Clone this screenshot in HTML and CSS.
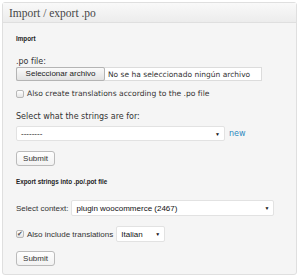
FILE: index.html
```html
<!DOCTYPE html>
<html lang="es">
<head>
    <meta charset="UTF-8">
    <title>Import / export .po</title>
    <link rel="stylesheet" href="styles.css">
</head>
<body>
    <div class="postbox">
        <h3 class="hndle">Import / export .po</h3>
        <div class="inside">
            <h4 class="section-title">Import</h4>

            <div class="label po-label">.po file:</div>
            <div class="file-input">
                <span class="file-btn">Seleccionar archivo</span>
                <span class="file-name">No se ha seleccionado ningún archivo</span>
            </div>

            <label class="check-row">
                <span class="checkbox"></span>
                Also create translations according to the .po file
            </label>

            <div class="label for-label">Select what the strings are for:</div>
            <div class="select-row">
                <div class="select wide">
                    <span>--------</span>
                    <span class="arrow">▼</span>
                </div>
                <a class="new-link" href="#">new</a>
            </div>

            <button class="button">Submit</button>

            <h4 class="section-title export">Export strings into .po/.pot file</h4>

            <div class="inline-row">
                <span class="label-alt">Select context:</span>
                <div class="select context">
                    <span>plugin woocommerce (2467)</span>
                    <span class="arrow">▼</span>
                </div>
            </div>

            <div class="inline-row include">
                <span class="checkbox checked">✔</span>
                <span class="label-alt">Also include translations</span>
                <div class="select lang">
                    <span>Italian</span>
                    <span class="arrow">▼</span>
                </div>
            </div>

            <button class="button last">Submit</button>
        </div>
    </div>
</body>
</html>
```

FILE: styles.css
```css
body {
    margin: 0;
    background: #fff;
    font-family: "DejaVu Sans", sans-serif;
    color: #333;
}
.postbox {
    margin: 2px 3px 0 2px;
    height: 273px;
    box-sizing: border-box;
    border: 1px solid #dfdfdf;
    border-radius: 3px;
    background: #f5f5f5;
}
.hndle {
    margin: 0;
    height: 20px;
    padding: 0 0 0 6px;
    font-family: "Liberation Serif", Georgia, serif;
    font-weight: normal;
    font-size: 11.5px;
    line-height: 20px;
    color: #464646;
    background: linear-gradient(#f9f9f9, #ececec);
    border-bottom: 1px solid #dfdfdf;
    box-sizing: border-box;
}
.inside {
    padding: 11px 13px 0 13px;
    display: flex;
    flex-direction: column;
    align-items: flex-start;
}
.section-title {
    margin: 0;
    font-family: "Liberation Sans", Arial, sans-serif;
    font-size: 6.3px;
    font-weight: bold;
    line-height: 10px;
    color: #222;
}
.section-title.export {
    margin-top: 11px;
}
.label {
    font-size: 8px;
    line-height: 10px;
}
.po-label {
    margin-top: 13px;
}
.for-label {
    margin-top: 13px;
}
.file-input {
    display: flex;
    align-items: center;
    width: 246px;
    height: 14px;
    background: #fff;
    border: 1px solid #dcdcdc;
    box-sizing: border-box;
}
.file-btn {
    height: 14px;
    width: 89px;
    margin: -1px 0 0 -1px;
    box-sizing: border-box;
    border: 1px solid #b4b4b4;
    border-radius: 2px;
    background: linear-gradient(#fafafa, #e2e2e2);
    font-family: "Liberation Sans", Arial, sans-serif;
    font-size: 8px;
    line-height: 12px;
    text-align: center;
    color: #222;
}
.file-name {
    margin-left: 3px;
    font-size: 7.5px;
    white-space: nowrap;
}
.check-row {
    display: flex;
    align-items: center;
    height: 10px;
    margin-top: 8px;
    font-size: 7.6px;
    line-height: 10px;
}
.checkbox {
    width: 8px;
    height: 8px;
    box-sizing: border-box;
    border: 1px solid #b8b8b8;
    border-radius: 2px;
    background: linear-gradient(#fff, #e4e4e4);
    margin-right: 3px;
    display: inline-flex;
    align-items: center;
    justify-content: center;
    font-size: 7px;
    color: #555;
    line-height: 1;
}
.select-row {
    display: flex;
    align-items: center;
    margin-top: 4px;
}
.select {
    display: flex;
    justify-content: space-between;
    align-items: center;
    height: 15px;
    box-sizing: border-box;
    padding: 0 4px 0 4px;
    background: #fff;
    border: 1px solid #e2e2e2;
    border-radius: 2px;
    font-family: "Liberation Sans", Arial, sans-serif;
    font-size: 8px;
    color: #111;
}
.arrow {
    font-size: 5px;
    color: #111;
}
.select.wide {
    width: 209px;
}
.new-link {
    margin-left: 4px;
    font-size: 8px;
    color: #2e8ac0;
    text-decoration: none;
}
.button {
    margin-top: 10px;
    height: 15px;
    width: 39px;
    padding: 0;
    border: 1px solid #bbb;
    border-radius: 3px;
    background: linear-gradient(#fefefe, #f2f2f2);
    font-family: "Liberation Sans", Arial, sans-serif;
    font-size: 8px;
    color: #333;
}
.button.last {
    margin-top: 9px;
}
.inline-row {
    display: flex;
    align-items: center;
    margin-top: 13px;
}
.label-alt {
    font-family: "Liberation Sans", Arial, sans-serif;
    font-size: 8px;
    margin-right: 3px;
}
.select.context {
    width: 203px;
    height: 16px;
}
.inline-row.include {
    margin-top: 10px;
}
.select.lang {
    width: 49px;
    height: 16px;
}
```
